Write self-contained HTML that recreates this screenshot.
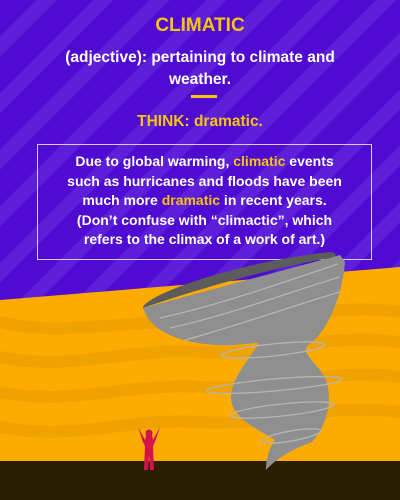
<!DOCTYPE html>
<html><head><style>
*{margin:0;padding:0;box-sizing:border-box}
body{width:400px;height:500px;overflow:hidden;background:#4f0bd2;font-family:"Liberation Sans",sans-serif;position:relative}
.bg{position:absolute;inset:0;background:repeating-linear-gradient(135deg,rgba(255,255,255,0) 0 26px,rgba(110,55,225,0.45) 26px 40px)}
.t{position:absolute;left:0;width:400px;text-align:center;font-weight:bold}
.y{color:#f7c40d}
.box{position:absolute;left:37px;top:144px;width:335px;height:116px;border:1.5px solid #d8ccf4;color:#fff;font-size:14px;font-weight:bold;text-align:center;line-height:19.5px;padding-top:7px}
</style></head><body>
<div class="bg"></div>
<div class="t y" style="top:15px;font-size:19px">CLIMATIC</div>
<div class="t" style="top:47px;font-size:15.5px;color:#fff;line-height:22px">(adjective): pertaining to climate and<br>weather.</div>
<div style="position:absolute;left:191px;top:95px;width:26px;height:3px;background:#f7c40d"></div>
<div class="t y" style="top:113px;font-size:15.5px">THINK: dramatic.</div>
<div class="box">Due to global warming, <span class="y">climatic</span> events<br>such as hurricanes and floods have been<br>much more <span class="y">dramatic</span> in recent years.<br>(Don’t confuse with “climactic”, which<br>refers to the climax of a work of art.)</div>
<svg width="400" height="500" style="position:absolute;left:0;top:0">
<polygon points="0,300 400,267 400,462 0,462" fill="#fdab00"/>
<g fill="none" stroke="#f0a200" stroke-width="12" stroke-linecap="round">
<path d="M0,322 C60,337 120,320 200,322 S330,302 400,312"/>
<path d="M0,357 C70,372 130,347 200,352 S320,332 400,342"/>
<path d="M0,392 C70,407 130,382 200,387 S320,367 400,377"/>
<path d="M0,427 C70,442 130,417 200,422 S320,402 400,412"/>
</g>
<rect x="0" y="461" width="400" height="39" fill="#2a1f03"/>
<path d="M143,308 C150,330 175,342 215,345 C240,347 262,340 258,345 C248,360 230,380 231,400 C234,420 260,430 275,440 C268,450 266,462 266,470 C275,460 290,450 312,442 C328,425 334,395 324,376 C318,365 300,352 308,345 C325,335 342,300 345,262 L340,255 Z" fill="#8f8f8f"/>
<path d="M143,308 C142,298 220,265 329,252 C335,252 340,256 330,258 C260,270 180,295 143,308 Z" fill="#5c5c5c"/>
<g fill="none" stroke="#b5b5b5" stroke-width="1.3">
<path d="M160,318 C220,305 290,280 338,264"/>
<path d="M170,328 C230,315 295,290 340,277"/>
<path d="M185,340 C240,325 295,305 340,292"/>
<ellipse cx="273" cy="350" rx="52" ry="6" transform="rotate(-6 273 350)"/>
<ellipse cx="274" cy="385" rx="68" ry="6" transform="rotate(-5 274 385)"/>
<ellipse cx="282" cy="410" rx="52" ry="6" transform="rotate(-6 282 410)"/>
<ellipse cx="291" cy="436" rx="30" ry="5" transform="rotate(-10 291 436)"/>
</g>
<path d="M138,427 L145,440 L146,435 L152,435 L153,440 L160,427 L155,442 L153,446 L154,470 L150,470 L149,455 L148,470 L144,470 L145,446 L143,442 Z" fill="#d5124c"/>
<circle cx="149" cy="433" r="3.5" fill="#d5124c"/>
</svg>
</body></html>
